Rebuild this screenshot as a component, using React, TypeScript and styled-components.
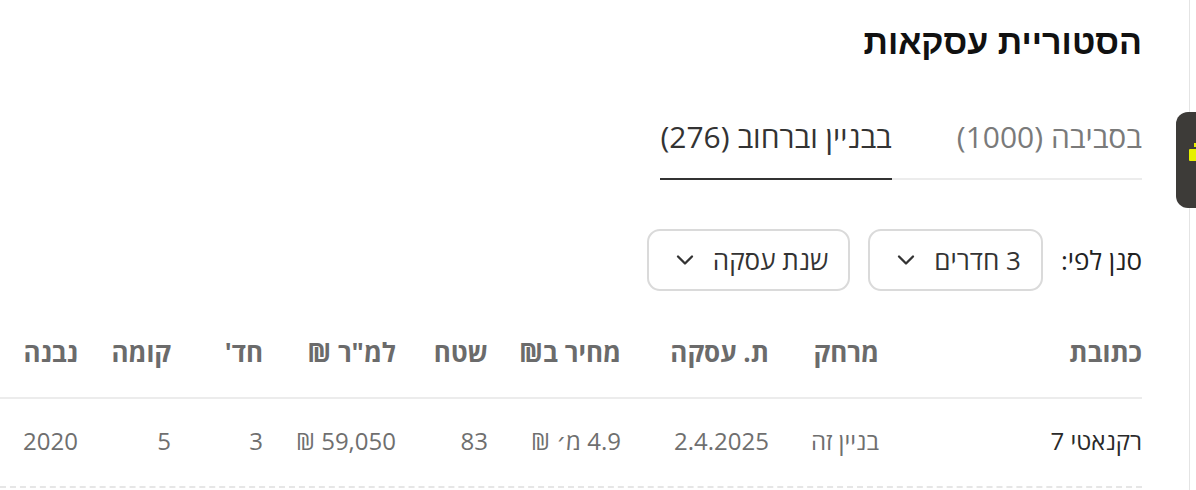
import React from 'react';
import styled, { createGlobalStyle } from 'styled-components';
import { ChevronDown } from 'lucide-react';

const GlobalStyle = createGlobalStyle`
  html, body {
    margin: 0;
    padding: 0;
    background: #ffffff;
    overflow: hidden;
  }
  * {
    box-sizing: border-box;
  }
`;

const Page = styled.div`
  direction: rtl;
  display: flex;
  width: 1196px;
  height: 490px;
  font-family: "Open Sans", "DejaVu Sans", sans-serif;
`;

const Rail = styled.div`
  position: relative;
  width: 54px;
  flex-shrink: 0;
  display: flex;
`;

const RailLine = styled.div`
  width: 1px;
  height: 100%;
  margin-inline-start: 6px;
  background: #e4e4e4;
`;

const FloatTab = styled.div`
  position: absolute;
  top: 112px;
  left: 34px;
  width: 40px;
  height: 96px;
  border-radius: 12px;
  background: #3d3b38;
  overflow: hidden;
`;

const Main = styled.div`
  width: 1142px;
  flex-shrink: 0;
  display: flex;
  flex-direction: column;
  align-items: flex-start;
`;

const Title = styled.h1`
  margin: 22px 0 0;
  font-family: "Liberation Sans", Arial, sans-serif;
  font-size: 34px;
  line-height: 40px;
  font-weight: 700;
  color: #111111;
`;

const Tabs = styled.div`
  display: flex;
  gap: 65px;
  width: 480px;
  margin-top: 57px;
  border-bottom: 2px solid #ececec;
`;

const Tab = styled.div<{ $active?: boolean }>`
  font-size: 30px;
  line-height: 36px;
  padding-bottom: 23px;
  margin-bottom: -2px;
  color: ${p => (p.$active ? '#333333' : '#7a7a7a')};
  border-bottom: 2px solid ${p => (p.$active ? '#333333' : 'transparent')};
  white-space: nowrap;
`;

const FilterRow = styled.div`
  display: flex;
  align-items: center;
  gap: 18px;
  margin-top: 49px;
`;

const FilterLabel = styled.span`
  font-size: 26px;
  color: #222222;
`;

const Dropdown = styled.div`
  display: flex;
  align-items: center;
  gap: 14px;
  height: 62px;
  padding: 0 20px 0 22px;
  border: 2px solid #dadada;
  border-radius: 13px;
  font-size: 26px;
  color: #333333;
  background: #ffffff;
`;

const Table = styled.div`
  width: 100%;
  margin-top: 29px;
`;

const Row = styled.div<{ $head?: boolean }>`
  display: grid;
  grid-template-columns: 263px 110px 148px 133px 92px 133px 92px 93px 78px;
  padding: ${p => (p.$head ? '17px 0 30px' : '27px 0 30px')};
  border-bottom: 2px ${p => (p.$head ? 'solid #ececec' : 'dashed #e6e6e6')};
`;

const HeadCell = styled.div`
  font-size: 26px;
  line-height: 30px;
  font-weight: 700;
  color: #6b6b6b;
  white-space: nowrap;
`;

const Cell = styled.div<{ $strong?: boolean }>`
  font-size: 24px;
  line-height: 30px;
  color: ${p => (p.$strong ? '#2a2a2a' : '#6f6f6f')};
  white-space: nowrap;
`;

const headers = ['כתובת', 'מרחק', 'ת. עסקה', 'מחיר ב₪', 'שטח', 'למ"ר ₪', "חד'", 'קומה', 'נבנה'];
const row = ['רקנאטי 7', 'בניין זה', '2.4.2025', '4.9 מ׳ ₪', '83', '59,050 ₪', '3', '5', '2020'];

export default function App() {
  return (
    <>
      <GlobalStyle />
      <Page>
        <Rail>
          <RailLine />
          <FloatTab>
            <svg width="40" height="96" viewBox="0 0 40 96">
              <rect x="18" y="31" width="5" height="4" fill="#e6f000" />
              <rect x="13" y="37" width="11" height="12" rx="1" fill="#e6f000" />
            </svg>
          </FloatTab>
        </Rail>
        <Main>
          <Title>הסטוריית עסקאות</Title>
          <Tabs>
            <Tab>בסביבה (1000)</Tab>
            <Tab $active>בבניין וברחוב (276)</Tab>
          </Tabs>
          <FilterRow>
            <FilterLabel>סנן לפי:</FilterLabel>
            <Dropdown>
              3 חדרים
              <ChevronDown size={28} strokeWidth={2} />
            </Dropdown>
            <Dropdown>
              שנת עסקה
              <ChevronDown size={28} strokeWidth={2} />
            </Dropdown>
          </FilterRow>
          <Table>
            <Row $head>
              {headers.map(h => (
                <HeadCell key={h}>{h}</HeadCell>
              ))}
            </Row>
            <Row>
              {row.map((c, i) => (
                <Cell key={i} $strong={i === 0}>
                  {c}
                </Cell>
              ))}
            </Row>
          </Table>
        </Main>
      </Page>
    </>
  );
}
